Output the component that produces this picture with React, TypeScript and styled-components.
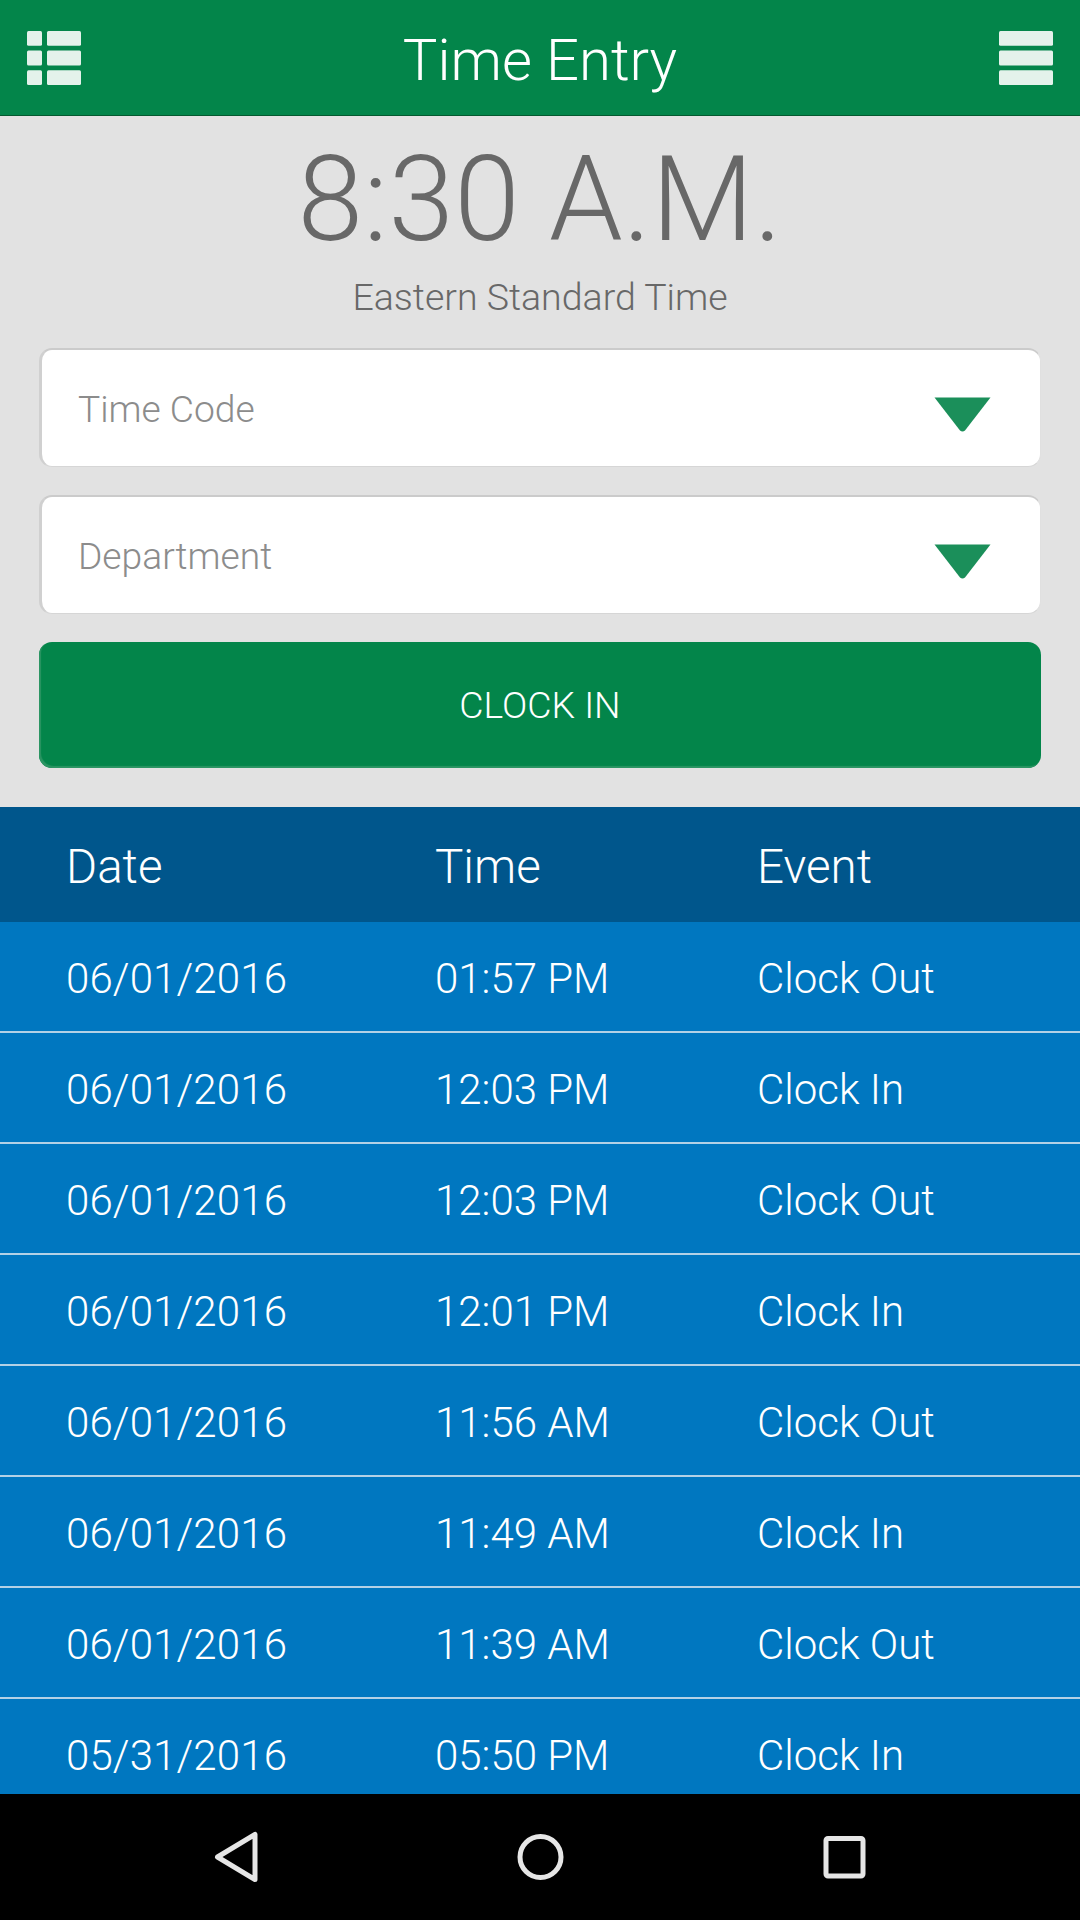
import React from "react";
import styled, { createGlobalStyle } from "styled-components";

const GlobalStyle = createGlobalStyle`
  *, *::before, *::after { box-sizing: border-box; }
  html, body { margin: 0; padding: 0; background: #000; }
  body { font-family: Roboto, "Noto Sans", sans-serif; font-weight: 300; }
`;

const Screen = styled.div`
  width: 1080px;
  height: 1920px;
  display: flex;
  flex-direction: column;
  overflow: hidden;
  background: #e2e2e2;
`;

const AppBar = styled.header`
  flex: none;
  height: 116px;
  display: flex;
  align-items: center;
  justify-content: space-between;
  padding: 0 27px;
  background: #03854a;
  border-bottom: 1px solid #04592f;
`;

const Title = styled.h1`
  margin: 0;
  padding-top: 4px;
  font-size: 58px;
  line-height: 116px;
  font-weight: 300;
  color: #fff;
`;

const BarButton = styled.button`
  display: flex;
  padding: 0;
  border: 0;
  background: none;
`;

const EntryPanel = styled.section`
  flex: none;
  height: 691px;
  display: flex;
  flex-direction: column;
  align-items: center;
  padding: 0 39px;
`;

const Clock = styled.div`
  margin-top: 17px;
  font-size: 118px;
  line-height: 134px;
  letter-spacing: 0.3px;
  color: #686868;
`;

const Zone = styled.div`
  margin-top: 6px;
  font-size: 37.5px;
  line-height: 48px;
  color: #686868;
`;

const Select = styled.button`
  flex: none;
  width: 1002px;
  height: 119px;
  margin-top: ${(p: { $gap: number }) => p.$gap}px;
  display: flex;
  align-items: center;
  justify-content: space-between;
  padding: 2px 49px 0 36px;
  border: solid;
  border-width: 2px 1px 1px 3px;
  border-color: #cbcbcb #e0e0e0 #d6d6d6 #d0d0d0;
  border-radius: 13px;
  background: #fff;
  font: 300 37.2px/48px Roboto, sans-serif;
  color: #8c8c8c;
`;

const ClockInButton = styled.button`
  flex: none;
  width: 1002px;
  height: 126px;
  margin-top: 28px;
  padding: 0;
  border: 0;
  border-radius: 13px;
  background: #03854a;
  box-shadow: inset 2px -2px 1px #2c9563;
  font: 300 37.3px/48px Roboto, sans-serif;
  color: #fff;
`;

const Table = styled.section`
  flex: 1;
  min-height: 0;
  overflow: hidden;
  background: #0077c0;
`;

const Row = styled.div`
  display: grid;
  grid-template-columns: 369px 322px 1fr;
  align-items: center;
  height: 111px;
  padding: 4px 0 0 66px;
  border-bottom: 2px solid #b3d1e6;
  font-size: 42px;
  color: #fff;
`;

const DateCell = styled.span`
  letter-spacing: 0.13px;
`;

const HeadRow = styled(Row)`
  height: 115px;
  padding-top: 4px;
  border-bottom: 0;
  background: #00568c;
  font-size: 47.5px;
`;

const NavBar = styled.nav`
  flex: none;
  height: 126px;
  display: flex;
  align-items: center;
  justify-content: space-between;
  padding: 0 206px;
  background: #000;
`;

const ListIcon = () => (
  <svg width="54" height="54" viewBox="0 0 54 54" fill="#e4f2eb">
    {[0, 19.6, 39.2].map((y) => (
      <g key={y}>
        <rect x="0" y={y} width="15" height="14.8" rx="1.5" />
        <rect x="20" y={y} width="34" height="14.8" rx="1.5" />
      </g>
    ))}
  </svg>
);

const MenuIcon = () => (
  <svg width="54" height="54" viewBox="0 0 54 54" fill="#e4f2eb">
    {[0, 19.6, 39.2].map((y) => (
      <rect key={y} x="0" y={y} width="54" height="14.8" rx="1.5" />
    ))}
  </svg>
);

const Arrow = styled.svg`
  width: 57px;
  height: 35px;
  margin-top: 10px;
`;

const DropArrow = () => (
  <Arrow viewBox="0 0 57 35">
    <path d="M0.5 0.5H56.5L31 33.5Q28.5 35.5 26 33.5Z" fill="#1b8f5a" />
  </Arrow>
);

const entries = [
  ["06/01/2016", "01:57 PM", "Clock Out"],
  ["06/01/2016", "12:03 PM", "Clock In"],
  ["06/01/2016", "12:03 PM", "Clock Out"],
  ["06/01/2016", "12:01 PM", "Clock In"],
  ["06/01/2016", "11:56 AM", "Clock Out"],
  ["06/01/2016", "11:49 AM", "Clock In"],
  ["06/01/2016", "11:39 AM", "Clock Out"],
  ["05/31/2016", "05:50 PM", "Clock In"],
];

export default function App() {
  return (
    <>
      <GlobalStyle />
      <Screen>
        <AppBar>
          <BarButton><ListIcon /></BarButton>
          <Title>Time Entry</Title>
          <BarButton><MenuIcon /></BarButton>
        </AppBar>
        <EntryPanel>
          <Clock>8:30 A.M.</Clock>
          <Zone>Eastern Standard Time</Zone>
          <Select $gap={27}>Time Code<DropArrow /></Select>
          <Select $gap={28}>Department<DropArrow /></Select>
          <ClockInButton>CLOCK IN</ClockInButton>
        </EntryPanel>
        <Table>
          <HeadRow>
            <span>Date</span>
            <span>Time</span>
            <span>Event</span>
          </HeadRow>
          {entries.map(([date, time, event], i) => (
            <Row key={i}>
              <DateCell>{date}</DateCell>
              <span>{time}</span>
              <span>{event}</span>
            </Row>
          ))}
        </Table>
        <NavBar>
          <svg width="60" height="60" viewBox="0 0 60 60" fill="none" stroke="#e6e6e6" strokeWidth="5" strokeLinejoin="round">
            <path d="M11.5 30L49 7.5V52.5Z" />
          </svg>
          <svg width="60" height="60" viewBox="0 0 60 60" fill="none" stroke="#e6e6e6" strokeWidth="5">
            <circle cx="30.5" cy="30" r="20.5" />
          </svg>
          <svg width="60" height="60" viewBox="0 0 60 60" fill="none" stroke="#e6e6e6" strokeWidth="5">
            <rect x="12" y="11.5" width="37" height="37.5" rx="2" />
          </svg>
        </NavBar>
      </Screen>
    </>
  );
}
